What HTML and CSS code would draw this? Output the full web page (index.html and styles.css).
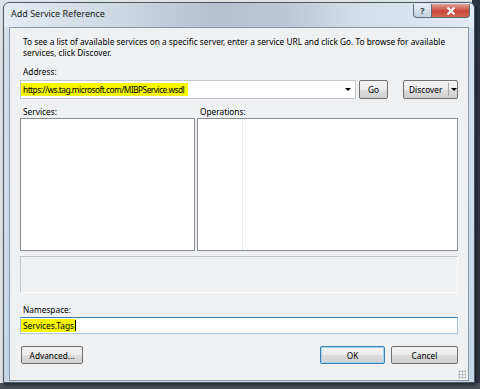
FILE: index.html
```html
<!DOCTYPE html>
<html lang="en">
<head>
    <link rel="stylesheet" href="styles.css">
</head>
<body>
<!-- desk: background behind the dialog -->
<div class="desk">
    <div class="win">
        <div class="title">
            <span class="caption">Add Service Reference</span>
            <div class="ctl">
                <span class="help">?</span>
                <span class="close"><svg width="10" height="8" viewBox="0 0 10 8"><path d="M1.5 0.5 L8.5 7.5 M8.5 0.5 L1.5 7.5" stroke="#fff" stroke-width="2"/></svg></span>
            </div>
        </div>
        <div class="content">
            <p class="intro">To see a list of available services on a specific server, enter a service URL and click Go. To browse for available<br>services, click Discover.</p>
            <div class="lbl">Address:</div>
            <div class="addr">
                <div class="combo"><span class="hl url">https://ws.tag.microsoft.com/MIBPService.wsdl</span><span class="down"></span></div>
                <div class="btn go">Go</div>
                <div class="btn discover"><span class="dtxt">Discover</span><span class="sep"></span><span class="down"></span></div>
            </div>
            <div class="panes">
                <div class="pane svc">
                    <div class="lbl">Services:</div>
                    <div class="list"></div>
                </div>
                <div class="pane ops">
                    <div class="lbl">Operations:</div>
                    <div class="list"><div class="col"></div></div>
                </div>
            </div>
            <div class="status"></div>
            <div class="lbl ns">Namespace:</div>
            <div class="textbox"><span class="hl">Services.Tags</span><span class="caret"></span></div>
            <div class="foot">
                <div class="btn adv">Advanced...</div>
                <div class="btn ok">OK</div>
                <div class="btn cancel">Cancel</div>
            </div>
            <span class="grip"></span>
        </div>
    </div>
</div>
</body>
</html>
```

FILE: styles.css
```css
*{margin: 0;padding: 0;box-sizing: border-box;}
body{width: 480px;height: 389px;overflow: hidden;background: linear-gradient(to right,#dfe2e6 0,#dfe2e6 472px,#2b3340 472px);font-family: "Noto Sans","Liberation Sans",sans-serif;font-size: 8.3px;color: #000;}
/*desk and window frame*/
.desk{height: 389px;padding: 2px 0 0 3px;background: linear-gradient(to bottom,transparent 0,transparent 383px,#4a4f57 383px);}
.win{width: 472px;height: 381px;border: 1px solid #4d5a68;border-radius: 6px 6px 0 0;background: linear-gradient(to bottom,#d6e2ee,#c4d5e6);padding: 0 5px 2px 5px;box-shadow: 1px 2px 3px rgba(0,0,0,.5);}
.title{height: 24px;display: flex;align-items: center;justify-content: space-between;margin: 0 -5px;padding: 0 0 0 7px;background: linear-gradient(to right,#e4ebf3 0,#cdd7e2 25%,#b4c0cd 45%,#bcc7d3 60%,#d3dde8 75%,#e2eaf3 100%);border-radius: 6px 6px 0 0;}
.caption{font-size: 9px;color: #1a1a1a;margin-top: -3px;}
.ctl{display: flex;align-self: flex-start;margin-top: 1px;margin-right: 4px;}
.help,.close{height: 14px;display: flex;align-items: center;justify-content: center;border: 1px solid #5e6a78;border-top: 0;}
.help{width: 19px;border-radius: 0 0 0 4px;background: linear-gradient(to bottom,#e8eef5,#c3cfdc);color: #3a4450;font-size: 9px;font-weight: bold;}
.close{width: 38px;border-left: 0;border-radius: 0 0 4px 0;background: linear-gradient(to bottom,#e2a196,#c7473a 55%,#d06a55);}
/*client area*/
.content{position: relative;height: 354px;border: 1px solid #8896a5;background: #eef0f2;padding: 9px 10px 0 10px;display: flex;flex-direction: column;}
.intro{line-height: 10.5px;padding-left: 3px;}
.lbl{line-height: 11px;padding-left: 3px;margin-top: 8px;}
.addr{display: flex;height: 19px;margin-top: 3px;}
.combo{flex: 1;display: flex;align-items: center;justify-content: space-between;background: #fff;border: 1px solid #c4c8cc;}
.hl{background: #f6f600;padding: 1px 2px;}
.url{letter-spacing: -0.5px;padding-right: 4px;}
.down{width: 0;height: 0;border-left: 3px solid transparent;border-right: 3px solid transparent;border-top: 3px solid #000;margin-right: 4px;}
.btn{display: flex;align-items: center;justify-content: center;border: 1px solid #707070;border-radius: 2px;background: linear-gradient(to bottom,#f3f3f3 0,#ebebeb 50%,#dddddd 51%,#cfcfcf 100%);}
.go{width: 29px;margin-left: 3px;}
.discover{width: 55px;margin-left: 15px;justify-content: flex-start;}
.dtxt{padding-left: 5px;width: 45px;}
.sep{width: 1px;height: 13px;background: #a8a8a8;margin-right: 2px;}
.discover .down{margin-right: 0;}
.panes{display: flex;gap: 2px;}
.pane{display: flex;flex-direction: column;}
.pane .lbl{margin-top: 7px;}
.svc{width: 175px;}
.ops{flex: 1;}
.list{height: 133px;margin-top: 1px;background: #fff;border: 1px solid #8a8d91;}
.col{width: 45px;height: 100%;border-right: 1px solid #e3ecf5;}
.status{height: 37px;margin-top: 5px;border: 1px solid #c2c4c6;border-right-color: #fafafa;border-bottom-color: #fafafa;}
.lbl.ns{margin-top: 11px;}
.textbox{height: 17px;margin-top: 2px;background: #fff;border: 1px solid #a7c7e4;border-top-color: #3d7bad;display: flex;align-items: center;}
.caret{width: 1px;height: 11px;background: #000;margin-left: -1px;}
.foot{display: flex;margin-top: 12px;height: 18px;}
.adv{width: 62px;margin-left: 1px;}
.ok{width: 65px;margin-left: auto;border-color: #3c7fb1;box-shadow: inset 0 0 0 1px #9fd5f3;}
.cancel{width: 67px;margin-left: 6px;}
.grip{position: absolute;right: 2px;bottom: 2px;width: 8px;height: 8px;background: radial-gradient(circle,#9aa3ad 0.8px,transparent 1.2px) 0 0/3px 3px;}
```
